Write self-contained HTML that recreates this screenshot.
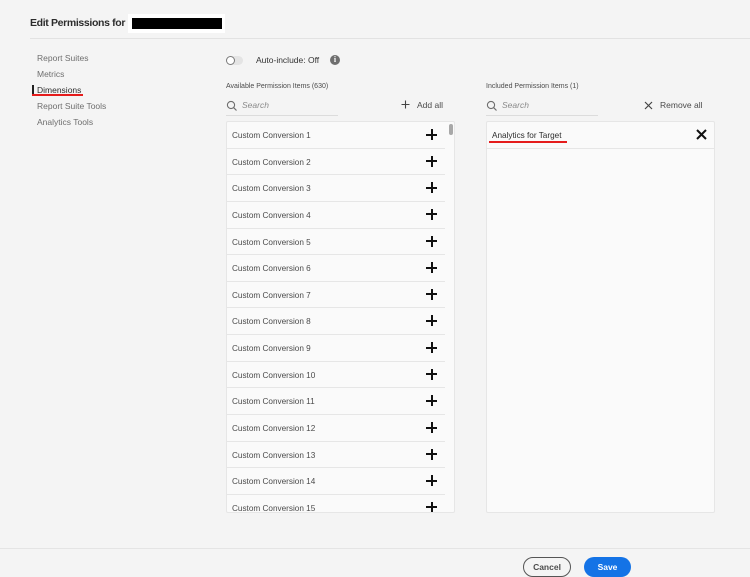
<!DOCTYPE html>
<html><head><meta charset="utf-8"><style>
*{box-sizing:border-box;margin:0;padding:0}
body{width:750px;height:577px;background:#f4f4f4;font-family:"Liberation Sans",sans-serif;color:#4b4b4b;position:relative;overflow:hidden}
.a{position:absolute}
.t{font-size:10.5px;font-weight:bold;color:#2c2c2c;left:30px;top:17px;letter-spacing:-0.35px}
.nav{font-size:8.5px;color:#6e6e6e;left:37px}
.row{position:absolute;left:0;width:218px;height:26.64px;border-bottom:1px solid #e6e6e6;font-size:8.2px;color:#4b4b4b;padding-left:5px;line-height:27px}
.plus{position:absolute;right:8px;top:7px;width:11px;height:11px}
.plus:before{content:"";position:absolute;left:4.5px;top:0;width:2px;height:11px;background:#111}
.plus:after{content:"";position:absolute;top:4.5px;left:0;height:2px;width:11px;background:#111}
</style></head><body>
<div class="a t">Edit Permissions for</div>
<div class="a" style="left:128px;top:14px;width:97px;height:19px;background:#fff"></div>
<div class="a" style="left:132px;top:18px;width:90px;height:11px;background:#000"></div>
<div class="a" style="left:30px;top:38px;width:720px;height:1px;background:#e2e2e2"></div>
<div class="a nav" style="top:53px">Report Suites</div>
<div class="a nav" style="top:69px">Metrics</div>
<div class="a nav" style="top:85px;color:#2c2c2c">Dimensions</div>
<div class="a" style="left:32px;top:85px;width:1.5px;height:11px;background:#222"></div>
<div class="a" style="left:32px;top:94px;width:51px;height:2px;background:#e51c1c"></div>
<div class="a nav" style="top:101px">Report Suite Tools</div>
<div class="a nav" style="top:117px">Analytics Tools</div>
<div class="a" style="left:226px;top:56px;width:17px;height:9px;border-radius:5px;background:#e4e4e4"></div>
<div class="a" style="left:226px;top:56px;width:9px;height:9px;border-radius:50%;border:1.5px solid #7a7a7a;background:#fff"></div>
<div class="a" style="left:256px;top:55px;font-size:8.5px;color:#333">Auto-include: Off</div>
<div class="a" style="left:330px;top:55px;width:10px;height:10px;border-radius:50%;background:#6e6e6e;color:#fff;font-size:8px;font-weight:bold;text-align:center;line-height:10px;font-family:'Liberation Serif',serif">i</div>
<div class="a" style="left:226px;top:83px;font-size:7px;color:#4b4b4b">Available Permission Items (630)</div>
<svg class="a" style="left:226px;top:100px" width="12" height="12"><circle cx="5" cy="5" r="3.6" fill="none" stroke="#6e6e6e" stroke-width="1.1"/><line x1="7.6" y1="7.6" x2="10.5" y2="10.5" stroke="#6e6e6e" stroke-width="1.2"/></svg>
<div class="a" style="left:242px;top:100px;font-size:8.5px;font-style:italic;color:#8a8a8a">Search</div>
<div class="a" style="left:226px;top:115px;width:112px;height:1px;background:#dcdcdc"></div>
<svg class="a" style="left:401px;top:100px" width="9" height="9"><path d="M4.5 0.5V8.5M0.5 4.5H8.5" stroke="#444" stroke-width="1.1"/></svg>
<div class="a" style="left:417px;top:100px;font-size:8.5px;color:#4b4b4b">Add all</div>
<div class="a" style="left:226px;top:121px;width:229px;height:392px;background:#fafafa;border:1px solid #e6e6e6;border-radius:2px;overflow:hidden">
<div class="a" style="left:222px;top:2px;width:4px;height:11px;border-radius:2px;background:#a8a8a8"></div>
<div class="row" style="top:0">Custom Conversion 1<i class="plus"></i></div>
<div class="row" style="top:26.64px">Custom Conversion 2<i class="plus"></i></div>
<div class="row" style="top:53.28px">Custom Conversion 3<i class="plus"></i></div>
<div class="row" style="top:79.92px">Custom Conversion 4<i class="plus"></i></div>
<div class="row" style="top:106.56px">Custom Conversion 5<i class="plus"></i></div>
<div class="row" style="top:133.2px">Custom Conversion 6<i class="plus"></i></div>
<div class="row" style="top:159.84px">Custom Conversion 7<i class="plus"></i></div>
<div class="row" style="top:186.48px">Custom Conversion 8<i class="plus"></i></div>
<div class="row" style="top:213.12px">Custom Conversion 9<i class="plus"></i></div>
<div class="row" style="top:239.76px">Custom Conversion 10<i class="plus"></i></div>
<div class="row" style="top:266.4px">Custom Conversion 11<i class="plus"></i></div>
<div class="row" style="top:293.04px">Custom Conversion 12<i class="plus"></i></div>
<div class="row" style="top:319.68px">Custom Conversion 13<i class="plus"></i></div>
<div class="row" style="top:346.32px">Custom Conversion 14<i class="plus"></i></div>
<div class="row" style="top:372.96px">Custom Conversion 15<i class="plus"></i></div>
</div>
<div class="a" style="left:486px;top:83px;font-size:7px;color:#4b4b4b">Included Permission Items (1)</div>
<svg class="a" style="left:486px;top:100px" width="12" height="12"><circle cx="5" cy="5" r="3.6" fill="none" stroke="#6e6e6e" stroke-width="1.1"/><line x1="7.6" y1="7.6" x2="10.5" y2="10.5" stroke="#6e6e6e" stroke-width="1.2"/></svg>
<div class="a" style="left:502px;top:100px;font-size:8.5px;font-style:italic;color:#8a8a8a">Search</div>
<div class="a" style="left:486px;top:115px;width:112px;height:1px;background:#dcdcdc"></div>
<svg class="a" style="left:644px;top:101px" width="9" height="9"><path d="M1 1L8 8M8 1L1 8" stroke="#444" stroke-width="1.2"/></svg>
<div class="a" style="left:660px;top:100px;font-size:8.5px;color:#4b4b4b">Remove all</div>
<div class="a" style="left:486px;top:121px;width:229px;height:392px;background:#fafafa;border:1px solid #e6e6e6;border-radius:2px">
<div class="row" style="top:0;width:227px;color:#2c2c2c">Analytics for Target</div>
<svg class="a" style="left:209px;top:7px" width="11" height="11"><path d="M1 1L10 10M10 1L1 10" stroke="#111" stroke-width="2"/></svg>
</div>
<div class="a" style="left:489px;top:141px;width:78px;height:2px;background:#e51c1c"></div>
<div class="a" style="left:0;top:548px;width:750px;height:1px;background:#e4e4e4"></div>
<div class="a" style="left:523px;top:557px;width:48px;height:20px;border:1.2px solid #555;border-radius:10px;font-size:8.5px;font-weight:bold;color:#4b4b4b;text-align:center;line-height:18px">Cancel</div>
<div class="a" style="left:584px;top:557px;width:47px;height:20px;background:#1473e6;border-radius:10px;font-size:8.5px;font-weight:bold;color:#fff;text-align:center;line-height:20px">Save</div>
</body></html>
